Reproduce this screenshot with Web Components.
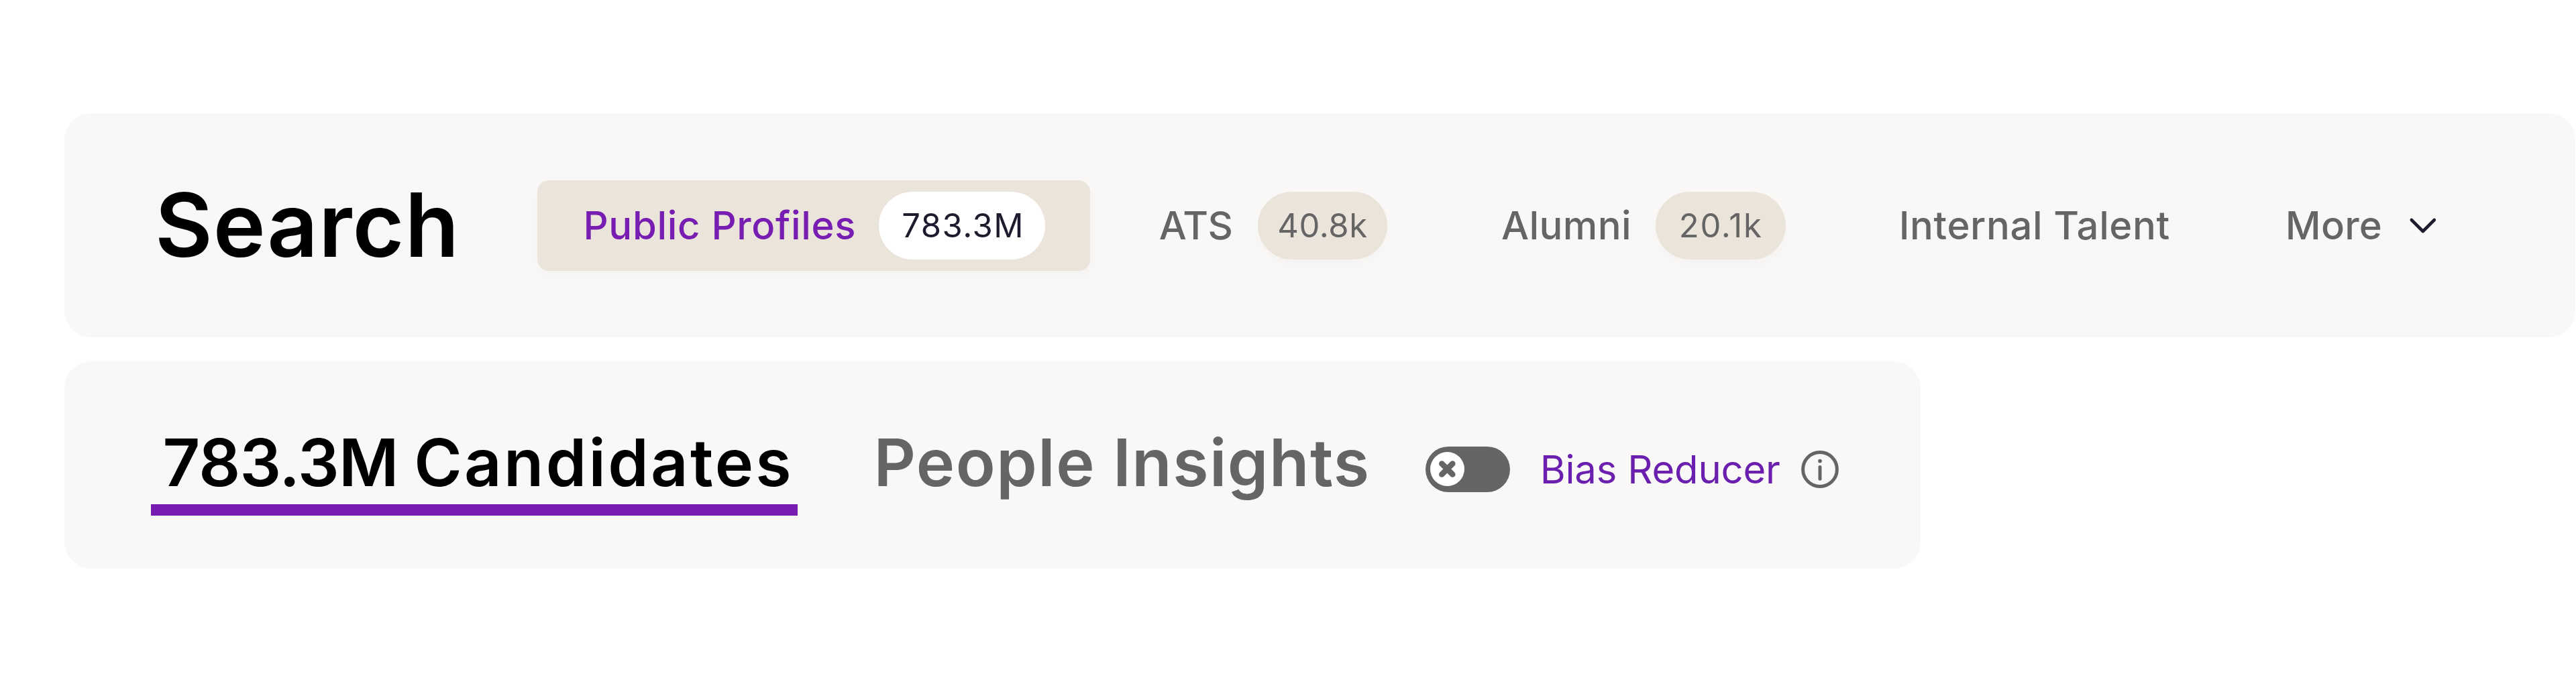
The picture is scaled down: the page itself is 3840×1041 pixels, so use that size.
<!DOCTYPE html>
<html lang="en">
<head>
<meta charset="utf-8">
<title>Search</title>
<style>
  body {
    margin: 0;
    background: #ffffff;
    color: #000000;
    font-family: Inter, "Liberation Sans", sans-serif;
  }
</style>
</head>
<body>
<search-page></search-page>

<script>
class PanelBox extends HTMLElement {
  constructor () {
    super()
    this.shadow = this.attachShadow({ mode: 'open' })
  }

  connectedCallback () {
    this.shadow.innerHTML =
    /* html */`
    <style>
      :host {
        display: flex;
        align-items: center;
        box-sizing: border-box;
        background: #f9f8f6;
        border-radius: 40px;
      }
    </style>
    <slot></slot>
    `
  }
}

class CountBadge extends HTMLElement {
  constructor () {
    super()
    this.shadow = this.attachShadow({ mode: 'open' })
  }

  connectedCallback () {
    this.shadow.innerHTML =
    /* html */`
    <style>
      :host {
        display: flex;
        flex: none;
        align-items: center;
        justify-content: center;
        box-sizing: border-box;
        height: 101px;
        border-radius: 51px;
        background: #ebe4db;
        color: #656565;
        font-size: 49px;
        font-weight: 400;
        white-space: nowrap;
        box-shadow: 0 8px 16px rgba(0, 0, 0, 0.02);
      }

      :host([light]) {
        padding-left: 3px;
        background: #ffffff;
        color: #1e1b2e;
        box-shadow: none;
      }
    </style>
    <slot></slot>
    `
  }
}

class SourceTab extends HTMLElement {
  constructor () {
    super()
    this.shadow = this.attachShadow({ mode: 'open' })
  }

  connectedCallback () {
    this.shadow.innerHTML =
    /* html */`
    <style>
      :host {
        display: flex;
        flex: none;
        align-items: center;
        height: 135px;
        padding: 0 67.4px 0 68.4px;
        border-radius: 17px;
        color: #656565;
        font-size: 58px;
        font-weight: 500;
        white-space: nowrap;
      }

      :host([active]) {
        background: #ebe4db;
        color: #771db2;
        box-shadow: 0 8px 18px rgba(0, 0, 0, 0.025);
      }

      .label {
        width: var(--label-width);
      }
    </style>
    <div class="label"><slot></slot></div>
    <slot name="end"></slot>
    `
  }
}

class ResultTab extends HTMLElement {
  constructor () {
    super()
    this.shadow = this.attachShadow({ mode: 'open' })
  }

  connectedCallback () {
    this.shadow.innerHTML =
    /* html */`
    <style>
      :host {
        display: block;
        flex: none;
        box-sizing: border-box;
        height: 138px;
        border-bottom: 17px solid transparent;
        color: #656565;
        font-size: 97px;
        line-height: 117px;
        font-weight: 600;
        white-space: nowrap;
      }

      :host([active]) {
        color: #000000;
        border-color: #771db2;
      }
    </style>
    <slot></slot>
    `
  }
}

class ToggleSwitch extends HTMLElement {
  constructor () {
    super()
    this.shadow = this.attachShadow({ mode: 'open' })
  }

  connectedCallback () {
    this.shadow.innerHTML =
    /* html */`
    <style>
      :host {
        display: flex;
        flex: none;
        align-items: center;
        box-sizing: border-box;
        width: 126px;
        height: 68px;
        padding-left: 7px;
        border-radius: 34px;
        background: #656565;
      }

      svg {
        display: block;
      }
    </style>
    <svg width="51" height="51" viewBox="0 0 51 51">
      <circle cx="25.5" cy="25.5" r="25.5" fill="#ffffff"/>
      <path d="M17.3 17.5L33.3 33.5M33.3 17.5L17.3 33.5" stroke="#656565" stroke-width="8.6" stroke-linecap="round"/>
    </svg>
    `
  }
}

class SearchPage extends HTMLElement {
  constructor () {
    super()
    this.shadow = this.attachShadow({ mode: 'open' })
  }

  connectedCallback () {
    this.render()
  }

  render () {
    this.shadow.innerHTML =
    /* html */`
    <style>
      :host {
        display: flex;
        flex-direction: column;
        align-items: flex-start;
        gap: 36px;
        box-sizing: border-box;
        width: 3840px;
        height: 1041px;
        padding: 169px 0 0 95.5px;
      }

      svg {
        display: block;
        flex: none;
      }

      .sources {
        width: 3743px;
        height: 334px;
        padding-left: 135.5px;
      }

      h1 {
        flex: none;
        width: 570px;
        margin: 0;
        padding-bottom: 3px;
        font-size: 132px;
        font-weight: 600;
        letter-spacing: 1px;
      }

      nav {
        display: flex;
        gap: 34px;
      }

      .results {
        width: 2767px;
        height: 309px;
        padding: 12.5px 0 0 129px;
      }

      .total {
        letter-spacing: -0.8px;
      }

      .bias {
        display: flex;
        align-items: center;
        height: 138px;
        margin-left: 83.5px;
        color: #6b1fae;
        font-size: 58px;
        white-space: nowrap;
      }

      .bias-label {
        width: 388px;
        margin-left: 44.7px;
        letter-spacing: -0.2px;
      }
    </style>

    <panel-box class="sources">
      <h1>Search</h1>
      <nav>
        <source-tab active style="--label-width: 441px; letter-spacing: 0.7px">
          Public Profiles
          <count-badge slot="end" light style="width: 247.5px; letter-spacing: 1.5px">783.3M</count-badge>
        </source-tab>
        <source-tab style="--label-width: 147px; letter-spacing: -0.6px">
          ATS
          <count-badge slot="end" style="width: 193.5px; letter-spacing: 0.6px">40.8k</count-badge>
        </source-tab>
        <source-tab style="--label-width: 230px; letter-spacing: 0.4px">
          Alumni
          <count-badge slot="end" style="width: 194.5px; letter-spacing: 1.7px">20.1k</count-badge>
        </source-tab>
        <source-tab style="--label-width: 406.4px; margin-left: -1.6px; letter-spacing: 0.63px">Internal Talent</source-tab>
        <source-tab style="--label-width: 182.5px; letter-spacing: 0.2px">
          More
          <svg slot="end" width="46" height="34" viewBox="0 0 46 34">
            <path d="M5.8 9L22.8 26L39.8 9" fill="none" stroke="#1e1b2e" stroke-width="4.6" stroke-linecap="round" stroke-linejoin="round"/>
          </svg>
        </source-tab>
      </nav>
    </panel-box>

    <panel-box class="results">
      <result-tab active style="width: 964px; padding-left: 18px; letter-spacing: 3.3px"><span class="total">783.3M </span>Candidates</result-tab>
      <result-tab style="width: 739px; margin-left: 114px; letter-spacing: 1.5px">People Insights</result-tab>
      <div class="bias">
        <toggle-switch></toggle-switch>
        <div class="bias-label">Bias Reducer</div>
        <svg width="58" height="58" viewBox="0 0 58 58">
          <circle cx="29" cy="29" r="25.4" fill="none" stroke="#656565" stroke-width="5"/>
          <circle cx="29" cy="16.6" r="2.9" fill="#656565"/>
          <path d="M29 25.4V43.2" stroke="#656565" stroke-width="5" stroke-linecap="round"/>
        </svg>
      </div>
    </panel-box>
    `
  }
}

customElements.define('panel-box', PanelBox)
customElements.define('count-badge', CountBadge)
customElements.define('source-tab', SourceTab)
customElements.define('result-tab', ResultTab)
customElements.define('toggle-switch', ToggleSwitch)
customElements.define('search-page', SearchPage)
</script>
</body>
</html>
